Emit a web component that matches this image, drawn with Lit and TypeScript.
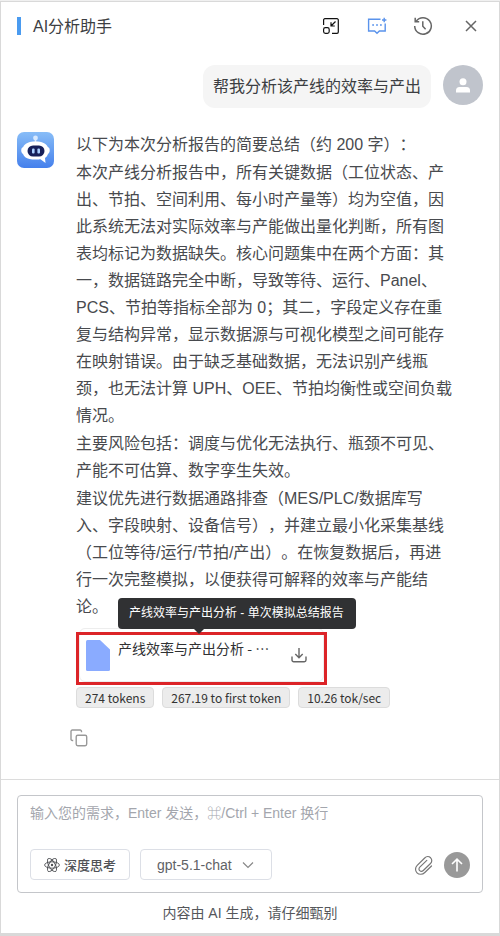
import { LitElement, html, css, svg } from "lit";
import { customElement, property, state } from "lit/decorators.js";

const paragraphs = [
  "以下为本次分析报告的简要总结（约 200 字）：",
  "本次产线分析报告中，所有关键数据（工位状态、产出、节拍、空间利用、每小时产量等）均为空值，因此系统无法对实际效率与产能做出量化判断，所有图表均标记为数据缺失。核心问题集中在两个方面：其一，数据链路完全中断，导致等待、运行、Panel、PCS、节拍等指标全部为 0；其二，字段定义存在重复与结构异常，显示数据源与可视化模型之间可能存在映射错误。由于缺乏基础数据，无法识别产线瓶颈，也无法计算 UPH、OEE、节拍均衡性或空间负载情况。",
  "主要风险包括：调度与优化无法执行、瓶颈不可见、产能不可估算、数字孪生失效。",
  "建议优先进行数据通路排查（MES/PLC/数据库写入、字段映射、设备信号），并建立最小化采集基线（工位等待/运行/节拍/产出）。在恢复数据后，再进行一次完整模拟，以便获得可解释的效率与产能结论。",
];

const stats = ["274 tokens", "267.19 to first token", "10.26 tok/sec"];

const base = css`
  * {
    box-sizing: border-box;
  }
  button {
    display: flex;
    align-items: center;
    justify-content: center;
    margin: 0;
    padding: 0;
    border: 0;
    background: none;
    color: inherit;
    font: inherit;
    cursor: pointer;
  }
  svg {
    display: block;
    flex: none;
  }
  .line {
    fill: none;
    stroke: currentColor;
  }
`;

@customElement("panel-header")
export class PanelHeader extends LitElement {
  static styles = [
    base,
    css`
      :host {
        display: block;
      }
      .bar {
        display: flex;
        align-items: center;
        height: 48px;
        padding: 0 17px 0 16px;
      }
      .mark {
        width: 4px;
        height: 18px;
        margin-right: 12px;
        background: #4a9bf0;
      }
      .title {
        flex: 1;
        margin: 0;
        padding-bottom: 2px;
        font-size: 16px;
        font-weight: 400;
        color: #3c3e42;
      }
      .tools {
        display: flex;
        align-items: center;
        gap: 24px;
      }
      .tool {
        width: 22px;
        height: 22px;
        color: #666;
      }
      .dark {
        color: #111;
      }
      .blue {
        color: #5a93ec;
      }
      .close {
        margin-left: 2px;
      }
    `,
  ];

  render() {
    return html`
      <header class="bar">
        <span class="mark"></span>
        <h1 class="title">AI分析助手</h1>
        <div class="tools">
          <button class="tool dark" aria-label="缩小窗口">
            <svg class="line" width="18" height="18" viewBox="0 0 18 18" stroke-width="1.2">
              <path d="M1.600 8V3a1.300 1.300 0 0 1 1.300-1.300H15a1.300 1.300 0 0 1 1.300 1.300V15a1.300 1.300 0 0 1-1.300 1.300H10" />
              <path d="M13.500 4.500L9 9M9 5.200V9h3.800" />
              <rect x="1.600" y="10.700" width="5.600" height="5.600" rx="1.800" />
            </svg>
          </button>
          <button class="tool blue" aria-label="新建对话">
            <svg class="line" width="20" height="18" viewBox="0 0 20 18" stroke-width="1.400">
              <path d="M13.500 2.200H1.600V14H7.600L10 16.300L12.400 14H18.200V6.500" />
              <path d="M17.200 0.800V5.200M15 3H19.400" />
              <path d="M5.200 8h1.800M9.100 8h1.800M13 8h1.800" stroke-width="1.700" />
            </svg>
          </button>
          <button class="tool" aria-label="历史记录">
            <svg class="line" width="20" height="20" viewBox="0 0 20 20" stroke-width="1.500">
              <path d="M3.200 5.200A8.300 8.300 0 1 1 1.700 10" />
              <path d="M2.200 1.700V5.700H6.200" />
              <path d="M9.800 5.200V10.300L12.600 13.300" />
            </svg>
          </button>
          <button class="tool close" aria-label="关闭">
            <svg class="line" width="12" height="12" viewBox="0 0 12 12" stroke-width="1.500">
              <path d="M1 1L11 11M11 1L1 11" />
            </svg>
          </button>
        </div>
      </header>
    `;
  }
}

@customElement("file-card")
export class FileCard extends LitElement {
  @property() name = "";

  static styles = [
    base,
    css`
      :host {
        display: block;
        font-family: "Noto Sans CJK SC", sans-serif;
      }
      .card {
        position: relative;
        display: flex;
        align-items: flex-start;
        width: 251px;
        height: 53px;
        padding: 5px 7px;
        border: 3px solid #dc2428;
      }
      .card::before {
        content: "";
        position: absolute;
        inset: -7px 0 0;
        border: 1px solid #ededed;
        border-radius: 6px;
        z-index: -1;
      }
      .name {
        flex: 1;
        min-width: 0;
        margin: -2px 16px 0 8px;
        overflow: hidden;
        white-space: nowrap;
        text-overflow: ellipsis;
        font-size: 14px;
        line-height: 20px;
        color: #303133;
        text-decoration: none;
      }
      .save {
        width: 18px;
        height: 30px;
        margin-right: 9px;
        color: #666;
      }
      .tip {
        position: absolute;
        left: 39px;
        bottom: 100%;
        padding: 6px 12px 6px 11px;
        margin-bottom: 6px;
        border-radius: 4px;
        background: #303133;
        color: #fff;
        font-family: "Liberation Sans", "Noto Sans CJK SC", sans-serif;
        font-size: 12px;
        line-height: 19px;
        white-space: nowrap;
      }
      .tip::after {
        content: "";
        position: absolute;
        left: 76px;
        top: 100%;
        border: 5px solid transparent;
        border-top-color: #303133;
        border-bottom: 0;
      }
    `,
  ];

  render() {
    return html`
      <div class="card">
        <svg width="24" height="31" viewBox="0 0 24 31">
          <path d="M1.500 0H14L24 9.500V29.500Q24 31 22.500 31H1.500Q0 31 0 29.500V1.500Q0 0 1.500 0Z" fill="#8aabff" />
        </svg>
        <a class="name" href="#report" aria-describedby="tip">${this.name}</a>
        <button class="save" aria-label="下载">
          <svg class="line" width="16" height="16" viewBox="0 0 16 16" stroke-width="1.400">
            <path d="M8 1V10.500M4.300 7L8 10.700L11.700 7M1 9.500V13a1.700 1.700 0 0 0 1.700 1.700H13.300A1.700 1.700 0 0 0 15 13V9.500" />
          </svg>
        </button>
        <span class="tip" id="tip" role="tooltip">${this.name}</span>
      </div>
    `;
  }
}

@customElement("chat-thread")
export class ChatThread extends LitElement {
  static styles = [
    base,
    css`
      :host {
        display: block;
        position: relative;
        z-index: 0;
        padding: 15px 16px 32px;
      }
      .asked {
        display: flex;
        justify-content: flex-end;
        align-items: flex-start;
        gap: 12px;
      }
      .bubble {
        margin: 0;
        padding: 9px 10px 8px;
        border-radius: 12px;
        background: #f5f5f5;
        font-size: 16px;
        line-height: 26px;
        color: #3c3e42;
      }
      .person {
        width: 40px;
        height: 40px;
        display: flex;
        align-items: center;
        justify-content: center;
        border-radius: 50%;
        background: #c0c4cc;
        color: #fff;
      }
      .reply {
        display: flex;
        align-items: flex-start;
        gap: 22px;
        margin-top: 23px;
      }
      .bot {
        margin-top: 1px;
      }
      .body {
        flex: 1;
        min-width: 0;
        padding-right: 29px;
      }
      .text {
        display: flex;
        flex-direction: column;
        gap: 1px;
        margin-bottom: 12px;
        font-size: 16px;
        line-height: 27px;
        color: #484a4e;
        text-spacing-trim: space-all;
      }
      .text p {
        margin: 0;
      }
      .stats {
        display: flex;
        flex-wrap: wrap;
        gap: 8px;
        margin: 2px 0 0;
        padding: 0;
        list-style: none;
      }
      .stat {
        padding: 0 8px;
        border: 1px solid #dcdcdc;
        border-radius: 4px;
        background: #ececec;
        font-family: "Noto Sans CJK SC", sans-serif;
        font-size: 12px;
        line-height: 19px;
        color: #333;
      }
      .copy {
        margin: 21px 0 0 -6px;
        color: #999;
      }
    `,
  ];

  render() {
    return html`
      <section class="asked">
        <p class="bubble">帮我分析该产线的效率与产出</p>
        <span class="person">
          <svg width="14" height="15" viewBox="0 0 14 15" fill="currentColor">
            <circle cx="7" cy="3.800" r="3.500" />
            <path d="M0 14.500V12.500Q0 9 3.500 9H10.500Q14 9 14 12.500V14.500Z" />
          </svg>
        </span>
      </section>
      <section class="reply">
        <svg class="bot" width="37" height="36" viewBox="0 0 37 36">
          <defs>
            <linearGradient id="sky" x1="0" y1="0" x2="0" y2="1">
              <stop offset="0" stop-color="#88bdf7" />
              <stop offset="1" stop-color="#4580ec" />
            </linearGradient>
          </defs>
          <rect width="37" height="36" rx="7" fill="url(#sky)" />
          <circle cx="18.500" cy="6" r="2.400" fill="#d7e9ff" />
          <path d="M18.500 7V11" stroke="#d7e9ff" stroke-width="1.600" />
          <path
            d="M18.500 9.500C25 9.500 29.500 11.500 30.800 15C33.200 15.500 33.500 20.500 31 22C30.300 24 29.300 25 28 26L28.500 31L23.500 27.300C21.500 27.700 15 27.700 12.500 27C9 26.200 7 24.500 6 22C3.500 20.500 3.800 15.500 6.200 15C7.500 11.500 12 9.500 18.500 9.500Z"
            fill="#fff"
          />
          <rect x="10.500" y="13.500" width="17" height="11" rx="5.500" fill="#17205a" />
          <rect x="15" y="16.500" width="2.600" height="5" rx="1" fill="#a9cfff" />
          <rect x="20.400" y="16.500" width="2.600" height="5" rx="1" fill="#a9cfff" />
        </svg>
        <div class="body">
          <div class="text">${paragraphs.map((p) => html`<p>${p}</p>`)}</div>
          <file-card name="产线效率与产出分析 - 单次模拟总结报告"></file-card>
          <ul class="stats">
            ${stats.map((s) => html`<li class="stat">${s}</li>`)}
          </ul>
          <button class="copy" aria-label="复制">
            <svg class="line" width="18" height="18" viewBox="0 0 18 18" stroke-width="1.400">
              <rect x="6.200" y="6.200" width="10.500" height="10.500" rx="1.600" />
              <path d="M3.200 11.500H2.300A1.300 1.300 0 0 1 1 10.200V2.300A1.300 1.300 0 0 1 2.300 1H10.200A1.300 1.300 0 0 1 11.500 2.300V3.200" />
            </svg>
          </button>
        </div>
      </section>
    `;
  }
}

@customElement("chat-composer")
export class ChatComposer extends LitElement {
  @state() private draft = "";

  static styles = [
    base,
    css`
      :host {
        display: block;
        padding: 15px 16px 9px;
        border-top: 1px solid #dcdcdc;
      }
      .box {
        padding: 5px 12px 12px;
        border: 1px solid #c4c6ca;
        border-radius: 4px;
      }
      .input {
        display: block;
        width: 100%;
        height: 48px;
        padding: 0;
        border: 0;
        outline: 0;
        resize: none;
        background: none;
        font: inherit;
        font-size: 14px;
        line-height: 24px;
        color: #303133;
      }
      .input::placeholder {
        color: #a3a6ad;
        opacity: 1;
      }
      .row {
        display: flex;
        align-items: center;
      }
      .think {
        gap: 4px;
        width: 100px;
        height: 31px;
        margin-right: 10px;
        border: 1px solid #dcdfe6;
        border-radius: 4px;
        font-size: 13px;
        font-weight: 500;
        color: #505256;
      }
      .pick {
        position: relative;
        display: flex;
        align-items: center;
        color: #606266;
      }
      .model {
        appearance: none;
        width: 132px;
        height: 31px;
        margin: 0;
        padding: 0 16px;
        border: 1px solid #dcdfe6;
        border-radius: 4px;
        background: #fff;
        font: inherit;
        font-size: 14px;
        color: #606266;
      }
      .chevron {
        position: absolute;
        right: 18px;
        color: #888;
        pointer-events: none;
      }
      .clip {
        margin: 0 10px 0 auto;
        color: #777;
      }
      .send {
        width: 26px;
        height: 26px;
        border-radius: 50%;
        background: #999;
        color: #fff;
      }
      .note {
        margin: 9px 0 0;
        text-align: center;
        font-size: 14px;
        line-height: 22px;
        color: #55575b;
      }
    `,
  ];

  render() {
    const orbit = (turn: number) =>
      svg`<ellipse cx="8" cy="8" rx="7.400" ry="3.200" transform="rotate(${turn} 8 8)" />`;
    return html`
      <div class="box">
        <textarea
          class="input"
          aria-label="输入您的需求"
          placeholder="输入您的需求，Enter 发送，⌘/Ctrl + Enter 换行"
          .value=${this.draft}
          @input=${(e: Event) => (this.draft = (e.target as HTMLTextAreaElement).value)}
        ></textarea>
        <div class="row">
          <button class="think">
            <svg class="line" width="16" height="16" viewBox="0 0 16 16" stroke-width="0.900">
              ${orbit(0)} ${orbit(60)} ${orbit(120)}
              <circle cx="8" cy="8" r="1.200" fill="currentColor" stroke="none" />
            </svg>
            深度思考
          </button>
          <label class="pick">
            <select class="model" aria-label="模型">
              <option>gpt-5.1-chat</option>
            </select>
            <svg class="line chevron" width="12" height="8" viewBox="0 0 12 8" stroke-width="1.200">
              <path d="M1 1.500L6 6.500L11 1.500" />
            </svg>
          </label>
          <button class="clip" aria-label="添加附件">
            <svg class="line" width="20" height="20" viewBox="0 0 20 20" stroke-width="1.200" stroke-linecap="round">
              <path d="M17.500 11L10.800 17.500C8.500 19.800 5 19.800 3 17.800C1 15.800 1 12.500 3.200 10.300L10.700 3C12.400 1.300 15 1.300 16.600 2.800C18.200 4.400 18.100 6.900 16.500 8.500L9.300 15.500C8.200 16.600 6.700 16.600 5.700 15.600C4.700 14.600 4.800 13.200 5.800 12.200L12.800 5.400" />
            </svg>
          </button>
          <button class="send" aria-label="发送">
            <svg class="line" width="12" height="14" viewBox="0 0 12 14" stroke-width="1.600">
              <path d="M6 13.500V1.200M1 6L6 1.200L11 6" />
            </svg>
          </button>
        </div>
      </div>
      <p class="note">内容由 AI 生成，请仔细甄别</p>
    `;
  }
}

@customElement("app-root")
export class AppRoot extends LitElement {
  static styles = css`
    :host {
      display: flex;
      flex-direction: column;
      box-sizing: border-box;
      min-height: 100vh;
      padding-top: 1px;
      background: #f0f0f0;
      font-family: "Liberation Sans", "Noto Sans CJK SC", sans-serif;
    }
    .panel {
      flex: 1;
      display: flex;
      flex-direction: column;
      border: 1px solid #d9d9d9;
      border-bottom-width: 3px;
      background: #fff;
    }
    .thread {
      flex: 1;
    }
  `;

  render() {
    return html`
      <main class="panel" lang="zh-CN">
        <panel-header></panel-header>
        <chat-thread class="thread"></chat-thread>
        <chat-composer></chat-composer>
      </main>
    `;
  }
}
